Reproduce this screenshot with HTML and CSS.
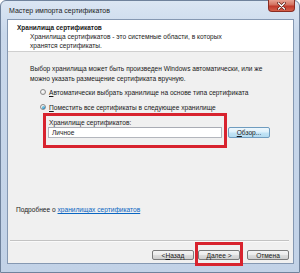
FILE: index.html
```html
<!DOCTYPE html>
<html lang="ru">
<head>
<meta charset="utf-8">
<title>Мастер импорта сертификатов</title>
<link rel="stylesheet" href="styles.css">
</head>
<body>
<div class="window">
  <div class="titlebar">
    <span class="title">Мастер импорта сертификатов</span>
    <div class="close">
      <svg width="9" height="8" viewBox="0 0 9 8"><path d="M1.5 1 L7.5 7 M7.5 1 L1.5 7" stroke="#5a1a12" stroke-width="2.6" stroke-linecap="round"/><path d="M1.5 1 L7.5 7 M7.5 1 L1.5 7" stroke="#ffffff" stroke-width="1.4" stroke-linecap="round"/></svg>
    </div>
  </div>
  <div class="client">
    <div class="header">
      <div class="h-title">Хранилища сертификатов</div>
      <div class="h-sub">Хранилища сертификатов - это системные области, в которых<br>хранятся сертификаты.</div>
    </div>
    <div class="body">
      <p class="intro">Выбор хранилища может быть произведен Windows автоматически, или же<br>можно указать размещение сертификата вручную.</p>
      <div class="radio-row r1"><span class="radio"></span><span><u>А</u>втоматически выбрать хранилище на основе типа сертификата</span></div>
      <div class="radio-row r2"><span class="radio checked"></span><span><u>П</u>оместить все сертификаты в следующее хранилище</span></div>
      <div class="store-row">
        <div class="store-box">
          <div class="store-label">Хранилище сертификатов:</div>
          <div class="store-input">Личное</div>
        </div>
        <div class="btn browse"><u>О</u>бзор...</div>
      </div>
      <div class="spacer"></div>
      <div class="more">Подробнее о <a class="link">хранилищах сертификатов</a></div>
    </div>
    <div class="footer">
      <div class="sep"></div>
      <div class="buttons">
        <div class="btn back">&lt; <u>Н</u>азад</div>
        <div class="btn next"><u>Д</u>алее &gt;</div>
        <div class="btn cancel">Отмена</div>
      </div>
    </div>
  </div>
</div>
</body>
</html>
```
FILE: styles.css
```css
* { box-sizing: border-box; }
html, body { margin: 0; padding: 0; background: #ffffff; }
body { font-family: "Liberation Sans", Arial, sans-serif; color: #1a1a1a; }

.window {
  width: 300px;
  height: 273px;
  border: 1px solid #6f829c;
  border-radius: 6px 6px 0 0;
  background: linear-gradient(180deg, #dbe6f3 0%, #c9d8eb 12%, #c2d2e7 100%);
  padding: 0 5px 8px 6px;
  display: flex;
  flex-direction: column;
}

.titlebar {
  height: 18px;
  display: flex;
  align-items: center;
  padding-left: 2px;
  position: relative;
}
.title { font-size: 7px; color: #1c1c1c; }
.close {
  position: absolute;
  right: -1px;
  top: -1px;
  width: 27px;
  height: 12px;
  border: 1px solid #8a2c22;
  border-top: none;
  border-radius: 0 0 4px 4px;
  background: linear-gradient(180deg, #e8a393 0%, #d2705e 45%, #c0392b 55%, #d5604a 100%);
  display: flex;
  align-items: center;
  justify-content: center;
}

.client {
  flex: 1;
  border: 1px solid #8598b2;
  background: #f0f0f0;
  display: flex;
  flex-direction: column;
  font-size: 6.6px;
}

.header {
  height: 32px;
  background: #ffffff;
  border-bottom: 1px solid #cfcfcf;
  padding: 3px 0 0 9px;
}
.h-title { font-weight: bold; font-size: 6.5px; line-height: 9px; }
.h-sub { margin: 1px 0 0 13px; line-height: 8.5px; }

.body {
  flex: 1;
  display: flex;
  flex-direction: column;
  padding-top: 12px;
}
.intro { margin: 0 0 0 22px; line-height: 10px; }

.radio-row {
  display: flex;
  align-items: center;
  height: 10px;
  margin-left: 32px;
  gap: 3px;
}
.r1 { margin-top: 3px; }
.r2 { margin-top: 5px; }
.radio {
  width: 6px;
  height: 6px;
  border-radius: 50%;
  border: 1px solid #8a8a8a;
  background: radial-gradient(circle at 40% 35%, #ffffff 0%, #e6e6e6 60%, #cfcfcf 100%);
  display: flex;
  align-items: center;
  justify-content: center;
}
.radio.checked::after {
  content: "";
  width: 3px;
  height: 3px;
  border-radius: 50%;
  background: radial-gradient(circle at 40% 35%, #8fe0f0 0%, #2a8fc8 60%, #1a5f96 100%);
}

.store-row {
  display: flex;
  margin: 1px 0 0 35px;
}
.store-box {
  width: 184px;
  height: 35px;
  border: 3px solid #d8232e;
  padding: 1.5px 2px 0 2px;
}
.store-label { line-height: 9px; padding-left: 1px; }
.store-input {
  height: 11px;
  background: #ffffff;
  border: 1px solid #b3b6bd;
  border-top-color: #a9acb4;
  padding-left: 3px;
  line-height: 9px;
}

.btn {
  height: 11px;
  border: 1px solid #7a7a7a;
  border-radius: 2px;
  background: linear-gradient(180deg, #f4f4f4 0%, #ebebeb 48%, #dcdcdc 52%, #cfcfcf 100%);
  display: flex;
  align-items: center;
  justify-content: center;
  line-height: 9px;
  font-size: 6.6px;
}
.browse {
  width: 42px;
  margin: 14px 0 0 1px;
  border-color: #6f9cbf;
  background: linear-gradient(180deg, #eef7fd 0%, #dcf0fb 48%, #c3e4f6 52%, #b4dbf0 100%);
}

.spacer { flex: 1; }
.more { margin: 0 0 26px 8px; line-height: 10px; }
.link { color: #0a66c2; text-decoration: underline; }

.footer { height: 22px; padding: 0 4px 2px 2px; }
.sep { border-top: 1px solid #c3c3c3; border-bottom: 1px solid #fafafa; height: 2px; margin-top: -1px; }
.buttons {
  display: flex;
  justify-content: flex-end;
  margin-top: 8px;
}
.buttons .btn { width: 42px; height: 10px; }
.back { margin-right: 4px; }
.next { margin-right: 7px; position: relative; }
.next::after {
  content: "";
  position: absolute;
  left: -4px;
  right: -4px;
  top: -9px;
  bottom: -7px;
  border: 3px solid #d8232e;
}
```
